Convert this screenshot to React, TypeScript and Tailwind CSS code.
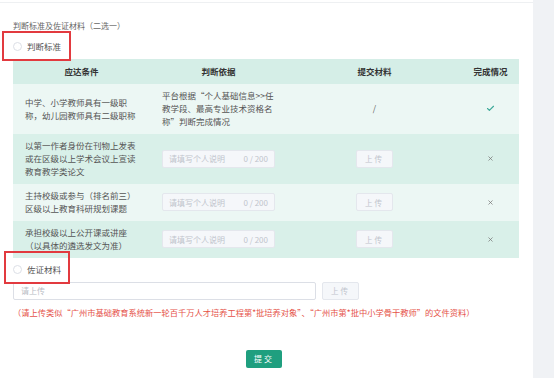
import React from 'react';
import { Check, X } from 'lucide-react';

interface Row {
  id: number;
  condition: string[];
  basis?: string[];
  auto: boolean;
  done: boolean;
  bg: string;
}

const rows: Row[] = [
  {
    id: 1,
    condition: ['中学、小学教师具有一级职', '称，幼儿园教师具有二级职称'],
    basis: ['平台根据“个人基础信息>>任', '教学段、最高专业技术资格名', '称”判断完成情况'],
    auto: true,
    done: true,
    bg: 'bg-[#ecf7f4]',
  },
  {
    id: 2,
    condition: ['以第一作者身份在刊物上发表', '或在区级以上学术会议上宣读', '教育教学类论文'],
    auto: false,
    done: false,
    bg: 'bg-[#d9f0e9]',
  },
  {
    id: 3,
    condition: ['主持校级或参与（排名前三）', '区级以上教育科研规划课题'],
    auto: false,
    done: false,
    bg: 'bg-[#ecf7f4]',
  },
  {
    id: 4,
    condition: ['承担校级以上公开课或讲座', '（以具体的遴选发文为准）'],
    auto: false,
    done: false,
    bg: 'bg-[#d9f0e9]',
  },
];

const Radio: React.FC<{ label: string }> = ({ label }) => (
  <div className="flex h-[13px] items-center">
    <span className="h-[9px] w-[9px] rounded-full border border-[#dcdfe6] bg-white" />
    <span className="ml-[5px] text-[8.5px] leading-[13px] text-[#555]">{label}</span>
  </div>
);

const UploadButton: React.FC = () => (
  <div className="flex h-[18px] w-[37px] items-center justify-center rounded-[2px] border border-[#e4e7ed] bg-[#f5f7fa] text-[7.5px] tracking-[2px] text-[#c0c4cc]">
    上传
  </div>
);

const App: React.FC = () => {
  return (
    <div
      lang="zh-CN"
      className="flex h-[378px] w-[554px] overflow-hidden bg-white font-['Noto_Sans_CJK_SC',sans-serif]"
    >
      <div className="relative w-[533px] pt-[2px]">
        <div className="border-t border-[#eef0f2] px-[13px] pt-[16px]">
          <div className="text-[8px] leading-[13px] text-[#666]">判断标准及佐证材料（二选一）</div>
          <div className="mt-[8px]">
            <Radio label="判断标准" />
          </div>

          <div className="mt-[5.5px] w-[506px] text-[8.5px] leading-[13px] text-[#555]">
            <div className="grid h-[25px] grid-cols-[137px_137px_175px_57px] items-center bg-[#d5eee7] text-center font-bold text-[#333]">
              <div>应达条件</div>
              <div>判断依据</div>
              <div>提交材料</div>
              <div>完成情况</div>
            </div>
            {rows.map((row) => (
              <div
                key={row.id}
                className={`grid grid-cols-[137px_137px_175px_57px] items-center py-[5.5px] ${row.bg}`}
              >
                <div className="pl-[12px]">
                  {row.condition.map((line) => (
                    <div key={line}>{line}</div>
                  ))}
                </div>
                <div className="pl-[12px]">
                  {row.basis ? (
                    row.basis.map((line) => <div key={line}>{line}</div>)
                  ) : (
                    <div className="flex h-[18px] w-[113px] items-center justify-between rounded-[2px] border border-[#e4e7ed] bg-[#f5f7fa] px-[6px] text-[8px] text-[#c0c4cc]">
                      <span>请填写个人说明</span>
                      <span>0 / 200</span>
                    </div>
                  )}
                </div>
                <div className="flex justify-center">
                  {row.auto ? <span className="text-[#666]">/</span> : <UploadButton />}
                </div>
                <div className="flex justify-center">
                  {row.done ? (
                    <Check size={9} strokeWidth={3} className="text-[#3ba898]" />
                  ) : (
                    <X size={7} strokeWidth={2.5} className="text-[#777]" />
                  )}
                </div>
              </div>
            ))}
          </div>

          <div className="mt-[5.5px]">
            <Radio label="佐证材料" />
          </div>
          <div className="mt-[5.5px] flex items-center gap-[6px]">
            <div className="flex h-[18px] w-[303px] items-center rounded-[2px] border border-[#dcdfe6] bg-white px-[7px] text-[8px] text-[#b8bcc4]">
              请上传
            </div>
            <UploadButton />
          </div>
          <div className="mt-[6px] text-[8.25px] leading-[13px] text-[#e55249]">
            （请上传类似“广州市基础教育系统新一轮百千万人才培养工程第*批培养对象”、“广州市第*批中小学骨干教师”的文件资料）
          </div>
          <div className="ml-[233px] mt-[31px] flex h-[18px] w-[36px] items-center justify-center rounded-[2px] bg-[#1f9f7f] text-[8px] tracking-[2px] text-white">
            提交
          </div>
        </div>

        <div className="absolute left-[2px] top-[31px] h-[30px] w-[69px] border-2 border-[#e23a3f]" />
        <div className="absolute left-[4px] top-[251px] h-[33px] w-[66px] border-2 border-[#e23a3f]" />
      </div>
      <div className="flex-1 bg-[#f0f2f5]" />
    </div>
  );
};

export default App;
